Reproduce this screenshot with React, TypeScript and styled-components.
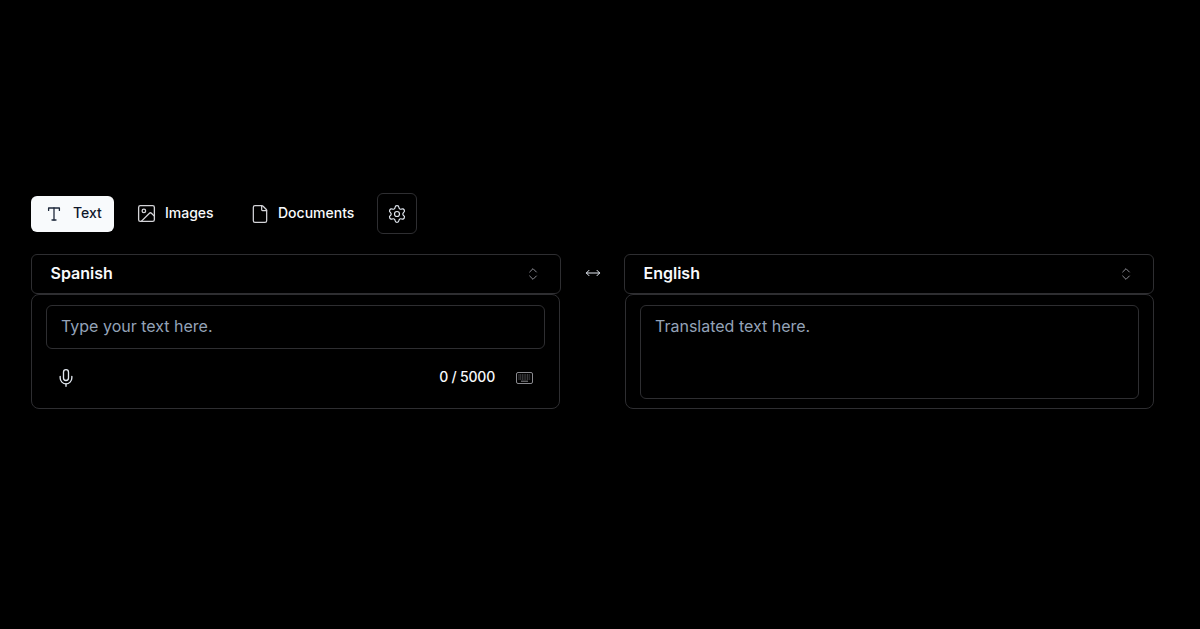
import React from "react";
import styled, { createGlobalStyle } from "styled-components";
import { Image, File, Settings, ChevronsUpDown, MoveHorizontal, Mic } from "lucide-react";

const Global = createGlobalStyle`
  html, body { margin: 0; padding: 0; background: #000; height: 100%; overflow: hidden; }
  body { font-family: Inter, "Liberation Sans", sans-serif; color: #f8fafc; }
  * { box-sizing: border-box; }
`;

const Page = styled.main`
  width: 1200px;
  height: 629px;
  padding: 193px 46px 0 31px;
  background: #000;
`;

const Toolbar = styled.div`
  display: flex;
  align-items: center;
  height: 41px;
  margin-bottom: 20px;
`;

const Tab = styled.button<{ $active?: boolean; $w: number; $pad: number; $gap: number; $ml?: number }>`
  display: flex;
  align-items: center;
  gap: ${(p) => p.$gap}px;
  width: ${(p) => p.$w}px;
  height: 36px;
  margin-left: ${(p) => p.$ml ?? 0}px;
  padding: 0 0 0 ${(p) => p.$pad}px;
  border: 0;
  border-radius: 6px;
  font: 500 14px/20px Inter, sans-serif;
  background: ${(p) => (p.$active ? "#f8fafc" : "transparent")};
  color: ${(p) => (p.$active ? "#0f172a" : "#f8fafc")};
`;

const TabLabel = styled.span`
  position: relative;
  top: -1px;
`;

const Gear = styled.button`
  display: flex;
  align-items: center;
  justify-content: center;
  width: 40px;
  height: 41px;
  margin-left: 10px;
  padding: 0;
  background: #000;
  border: 1px solid #2e2e31;
  border-radius: 6px;
  color: #e2e8f0;
`;

const Columns = styled.div`
  display: grid;
  grid-template-columns: 530px 1fr;
  column-gap: 63px;
`;

const Column = styled.section`
  display: flex;
  flex-direction: column;
`;

const Select = styled.div`
  display: flex;
  align-items: center;
  justify-content: space-between;
  height: 40px;
  padding: 0 19px 0 19px;
  border: 1px solid #2e2e31;
  border-radius: 6px;
  font: 600 16px/24px Inter, sans-serif;
  color: #f8fafc;
  svg { color: #a1a1aa; }
`;

const SelectLabel = styled.span`
  position: relative;
  top: -1px;
  left: -0.5px;
`;

const SwapWrap = styled.div`
  position: relative;
`;

const Swap = styled.div`
  position: absolute;
  left: 554px;
  top: 11px;
  color: #e2e8f0;
  display: flex;
`;

const Panel = styled.div<{ $h: number }>`
  width: calc(100% - 1px);
  height: ${(p) => p.$h}px;
  padding: 10px 14px;
  border: 1px solid #2e2e31;
  border-radius: 8px;
`;

const RightPanel = styled(Panel)`
  margin-left: 1px;
`;

const Field = styled.div<{ $h: number }>`
  height: ${(p) => p.$h}px;
  padding: 9px 14px;
  border: 1px solid #2e2e31;
  border-radius: 6px;
  font: 400 16px/22px Inter, sans-serif;
  color: #94a3b8;
`;

const Footer = styled.div`
  display: flex;
  align-items: center;
  height: 38px;
  margin-top: 10px;
  padding: 0 12px 0 10px;
  color: #e2e8f0;
`;

const Count = styled.span`
  position: relative;
  top: -1px;
  margin-left: auto;
  margin-right: 21px;
  font: 500 14px/20px Inter, sans-serif;
  letter-spacing: -0.2px;
  color: #f8fafc;
`;

const SerifT = () => (
  <svg width="14" height="14" viewBox="0 0 14 14" fill="none" stroke="#1e293b" strokeWidth="1.3" strokeLinecap="round" strokeLinejoin="round" aria-hidden="true">
    <path d="M1.6 3.4V1H12.4V3.4" />
    <path d="M7 1V13" />
    <path d="M5 13H9" />
  </svg>
);

const KeyboardIcon = () => (
  <svg width="17" height="12" viewBox="0 0 17 12" fill="none" aria-hidden="true">
    <rect x="0.5" y="0.5" width="16" height="11" rx="1.5" stroke="#8a8a8f" />
    <path d="M2.5 3h12M2.5 5h12M2.5 7h12" stroke="#77777c" strokeDasharray="1 0.7" />
    <path d="M5 9.2h7" stroke="#8a8a8f" />
  </svg>
);

export default function App() {
  return (
    <Page>
      <Global />
      <Toolbar>
        <Tab $active $w={83} $pad={16} $gap={12}>
          <SerifT />
          <TabLabel>Text</TabLabel>
        </Tab>
        <Tab $w={113} $pad={12} $gap={8} $ml={10}>
          <Image size={21} strokeWidth={1.5} color="#d4d4d8" />
          <TabLabel>Images</TabLabel>
        </Tab>
        <Tab $w={130} $pad={13} $gap={8}>
          <File size={20} strokeWidth={1.5} color="#d4d4d8" />
          <TabLabel>Documents</TabLabel>
        </Tab>
        <Gear aria-label="Settings">
          <Settings size={20} strokeWidth={1.4} />
        </Gear>
      </Toolbar>
      <SwapWrap>
        <Swap>
          <MoveHorizontal size={16} strokeWidth={1.5} />
        </Swap>
        <Columns>
          <Column>
            <Select>
              <SelectLabel>Spanish</SelectLabel>
              <ChevronsUpDown size={16} strokeWidth={1.3} />
            </Select>
            <Panel $h={115}>
              <Field $h={44}>Type your text here.</Field>
              <Footer>
                <Mic size={20} strokeWidth={1.6} />
                <Count>0 / 5000</Count>
                <KeyboardIcon />
              </Footer>
            </Panel>
          </Column>
          <Column>
            <Select>
              <SelectLabel>English</SelectLabel>
              <ChevronsUpDown size={16} strokeWidth={1.3} />
            </Select>
            <RightPanel $h={115}>
              <Field $h={94}>Translated text here.</Field>
            </RightPanel>
          </Column>
        </Columns>
      </SwapWrap>
    </Page>
  );
}
